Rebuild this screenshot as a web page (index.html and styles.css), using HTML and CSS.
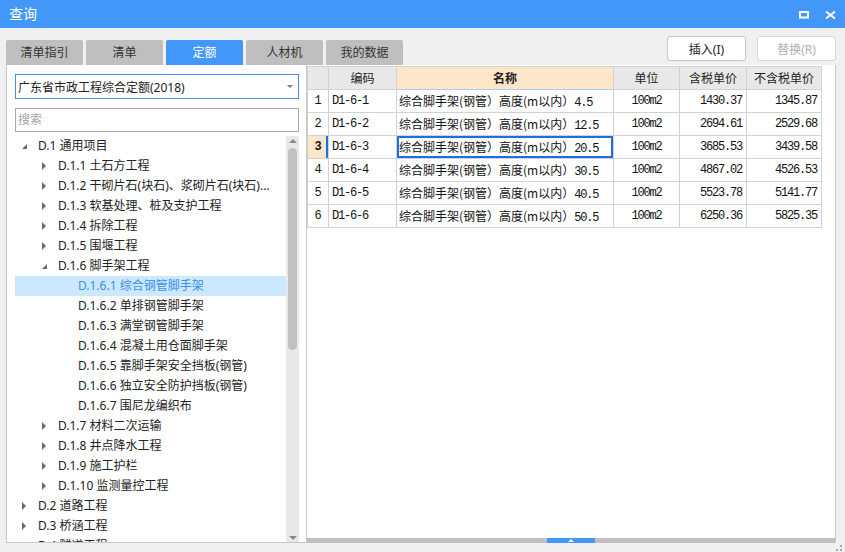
FILE: index.html
```html
<!DOCTYPE html>
<html lang="zh-CN">
<head>
<meta charset="utf-8">
<title>查询</title>
<link rel="stylesheet" href="styles.css">
</head>
<body>
<div class="window">
  <div class="titlebar">
    <span class="title">查询</span>
    <div class="win-btns">
      <svg class="win-icon" width="10" height="8" viewBox="0 0 10 8"><rect x="1" y="1" width="8" height="5.5" fill="none" stroke="#fff" stroke-width="2"/></svg>
      <svg class="win-icon" width="11" height="8" viewBox="0 0 11 8"><path d="M1 0.5 L10 7.5 M10 0.5 L1 7.5" stroke="#fff" stroke-width="2" fill="none"/></svg>
    </div>
  </div>

  <div class="toolbar">
    <div class="tabs">
      <div class="tab">清单指引</div>
      <div class="tab">清单</div>
      <div class="tab active">定额</div>
      <div class="tab">人材机</div>
      <div class="tab">我的数据</div>
    </div>
    <div class="actions">
      <button class="btn">插入(I)</button>
      <button class="btn disabled">替换(R)</button>
    </div>
  </div>

  <div class="content">
    <div class="left-panel">
      <div class="select"><span>广东省市政工程综合定额(2018)</span><span class="select-arrow"></span></div>
      <div class="search">搜索</div>
      <div class="tree-wrap">
        <ul class="tree">
          <li class="l0"><span class="caret open"></span><span>D.1 通用项目</span></li>
          <li class="l1"><span class="caret closed"></span><span>D.1.1 土石方工程</span></li>
          <li class="l1"><span class="caret closed"></span><span>D.1.2 干砌片石(块石)、浆砌片石(块石)...</span></li>
          <li class="l1"><span class="caret closed"></span><span>D.1.3 软基处理、桩及支护工程</span></li>
          <li class="l1"><span class="caret closed"></span><span>D.1.4 拆除工程</span></li>
          <li class="l1"><span class="caret closed"></span><span>D.1.5 围堰工程</span></li>
          <li class="l1"><span class="caret open"></span><span>D.1.6 脚手架工程</span></li>
          <li class="l2 selected"><span class="caret"></span><span>D.1.6.1 综合钢管脚手架</span></li>
          <li class="l2"><span class="caret"></span><span>D.1.6.2 单排钢管脚手架</span></li>
          <li class="l2"><span class="caret"></span><span>D.1.6.3 满堂钢管脚手架</span></li>
          <li class="l2"><span class="caret"></span><span>D.1.6.4 混凝土用仓面脚手架</span></li>
          <li class="l2"><span class="caret"></span><span>D.1.6.5 靠脚手架安全挡板(钢管)</span></li>
          <li class="l2"><span class="caret"></span><span>D.1.6.6 独立安全防护挡板(钢管)</span></li>
          <li class="l2"><span class="caret"></span><span>D.1.6.7 围尼龙编织布</span></li>
          <li class="l1"><span class="caret closed"></span><span>D.1.7 材料二次运输</span></li>
          <li class="l1"><span class="caret closed"></span><span>D.1.8 井点降水工程</span></li>
          <li class="l1"><span class="caret closed"></span><span>D.1.9 施工护栏</span></li>
          <li class="l1"><span class="caret closed"></span><span>D.1.10 监测量控工程</span></li>
          <li class="l0"><span class="caret closed"></span><span>D.2 道路工程</span></li>
          <li class="l0"><span class="caret closed"></span><span>D.3 桥涵工程</span></li>
          <li class="l0"><span class="caret closed"></span><span>D.4 隧道工程</span></li>
        </ul>
        <div class="vscroll">
          <span class="arrow-up"></span>
          <div class="vthumb"></div>
          <div class="spacer"></div>
          <span class="arrow-down"></span>
        </div>
      </div>
    </div>

    <div class="right-panel">
      <div class="table-area">
        <table class="grid">
          <colgroup>
            <col class="c-rn"><col class="c-code"><col class="c-name"><col class="c-unit"><col class="c-tax"><col class="c-notax">
          </colgroup>
          <thead>
            <tr><th></th><th>编码</th><th class="name-h">名称</th><th>单位</th><th>含税单价</th><th>不含税单价</th></tr>
          </thead>
          <tbody>
            <tr><td class="rn">1</td><td class="code">D1-6-1</td><td class="name">综合脚手架(钢管）高度(m以内）<span class="num">4.5</span></td><td class="unit">100m2</td><td class="price">1430.37</td><td class="price">1345.87</td></tr>
            <tr><td class="rn">2</td><td class="code">D1-6-2</td><td class="name">综合脚手架(钢管）高度(m以内）<span class="num">12.5</span></td><td class="unit">100m2</td><td class="price">2694.61</td><td class="price">2529.68</td></tr>
            <tr class="current"><td class="rn">3</td><td class="code">D1-6-3</td><td class="name focus">综合脚手架(钢管）高度(m以内）<span class="num">20.5</span></td><td class="unit">100m2</td><td class="price">3685.53</td><td class="price">3439.58</td></tr>
            <tr><td class="rn">4</td><td class="code">D1-6-4</td><td class="name">综合脚手架(钢管）高度(m以内）<span class="num">30.5</span></td><td class="unit">100m2</td><td class="price">4867.02</td><td class="price">4526.53</td></tr>
            <tr><td class="rn">5</td><td class="code">D1-6-5</td><td class="name">综合脚手架(钢管）高度(m以内）<span class="num">40.5</span></td><td class="unit">100m2</td><td class="price">5523.78</td><td class="price">5141.77</td></tr>
            <tr><td class="rn">6</td><td class="code">D1-6-6</td><td class="name">综合脚手架(钢管）高度(m以内）<span class="num">50.5</span></td><td class="unit">100m2</td><td class="price">6250.36</td><td class="price">5825.35</td></tr>
          </tbody>
        </table>
      </div>
      <div class="hscroll"><div class="hthumb"></div></div>
    </div>
  </div>

  <svg class="grip" width="10" height="8" viewBox="0 0 10 8"><rect x="6" y="1" width="2" height="2" fill="#a8a8a8"/><rect x="6" y="5" width="2" height="2" fill="#a8a8a8"/><rect x="2" y="5" width="2" height="2" fill="#a8a8a8"/></svg>
</div>
</body>
</html>
```

FILE: styles.css
```css
* { box-sizing: border-box; }

body {
  margin: 0;
  background: #f0f0f0;
  font-family: "Noto Sans", "Noto Sans CJK SC", sans-serif;
  font-size: 12px;
  color: #222;
}

.window {
  width: 845px;
  height: 552px;
  position: relative;
  overflow: hidden;
  display: flex;
  flex-direction: column;
  background: #f0f0f0;
}

/* title bar */
.titlebar {
  height: 28px;
  flex: none;
  background: #4297f8;
  color: #fff;
  display: flex;
  align-items: center;
  padding: 0 9px;
  font-size: 14px;
}
.title { line-height: 28px; }
.win-btns {
  margin-left: auto;
  display: flex;
  align-items: center;
  gap: 16px;
  padding-top: 1px;
}
.win-icon { display: block; }

/* toolbar */
.toolbar {
  height: 37px;
  flex: none;
  display: flex;
  padding: 0 9px 0 6px;
}
.tabs {
  display: flex;
  gap: 3px;
  align-self: flex-end;
}
.tab {
  width: 77px;
  height: 25px;
  background: #bfbfbf;
  border-radius: 2px 2px 0 0;
  text-align: center;
  line-height: 25px;
  color: #333;
  font-size: 12px;
}
.tab.active { background: #4297f8; color: #fff; }

.actions {
  margin-left: auto;
  display: flex;
  gap: 11px;
  padding-top: 8px;
}
.btn {
  width: 79px;
  height: 25px;
  background: #fff;
  border: 1px solid #c6c6c6;
  border-radius: 3px;
  font-family: inherit;
  font-size: 12px;
  color: #222;
  padding: 0;
}
.btn.disabled { color: #b0b0b0; border-color: #d6d6d6; }

/* content */
.content {
  flex: 1;
  min-height: 0;
  display: flex;
  padding: 0 9px 9px 6px;
}

.left-panel {
  width: 301px;
  flex: none;
  background: #fff;
  border: 1px solid #c8c8c8;
  border-top: none;
  display: flex;
  flex-direction: column;
  padding: 9px 7px 0 8px;
}
.select {
  height: 25px;
  flex: none;
  border: 1px solid #3d8ff0;
  display: flex;
  align-items: center;
  padding: 0 5px 0 2px;
  color: #222;
}
.select-arrow {
  margin-left: auto;
  width: 0;
  height: 0;
  border-top: 3px solid #7a7a7a;
  border-left: 3px solid transparent;
  border-right: 3px solid transparent;
}
.search {
  margin-top: 9px;
  height: 24px;
  flex: none;
  border: 1px solid #a8a8a8;
  padding-left: 2px;
  line-height: 22px;
  color: #a5a5a5;
}

.tree-wrap {
  margin-top: 4px;
  flex: 1;
  min-height: 0;
  display: flex;
  overflow: hidden;
}
.tree {
  flex: 1;
  list-style: none;
  margin: 0;
  padding: 0;
  overflow: hidden;
}
.tree li {
  height: 20px;
  line-height: 20px;
  display: flex;
  align-items: center;
  white-space: nowrap;
  color: #222;
}
.tree .l0 { padding-left: 0; }
.tree .l1 { padding-left: 20px; }
.tree .l2 { padding-left: 40px; }
.tree li.selected { background: #cce8ff; color: #3b8ef0; }

.caret {
  width: 23px;
  height: 20px;
  flex: none;
  display: flex;
  align-items: center;
  padding-left: 7px;
}
.caret.closed::before {
  content: "";
  width: 0;
  height: 0;
  border-left: 4px solid #6a6a6a;
  border-top: 4px solid transparent;
  border-bottom: 4px solid transparent;
}
.caret.open::before {
  content: "";
  width: 0;
  height: 0;
  margin-top: 1px;
  border-bottom: 5px solid #6a6a6a;
  border-left: 5px solid transparent;
}

.vscroll {
  width: 13px;
  flex: none;
  background: #e8e8e8;
  display: flex;
  flex-direction: column;
  align-items: center;
  padding: 3px 0 2px;
}
.arrow-up {
  width: 0;
  height: 0;
  border-bottom: 4px solid #8a8a8a;
  border-left: 4px solid transparent;
  border-right: 4px solid transparent;
}
.arrow-down {
  width: 0;
  height: 0;
  border-top: 4px solid #8a8a8a;
  border-left: 4px solid transparent;
  border-right: 4px solid transparent;
}
.vthumb {
  width: 9px;
  height: 202px;
  margin-top: 5px;
  border-radius: 5px;
  background: #c1c1c1;
}
.spacer { flex: 1; }

/* right panel */
.right-panel {
  flex: 1;
  min-width: 0;
  background: #fff;
  border-right: 1px solid #c8c8c8;
  display: flex;
  flex-direction: column;
}
.table-area {
  flex: 1;
  min-height: 0;
  padding-top: 1px;
  overflow: hidden;
}
.grid {
  border-collapse: collapse;
  table-layout: fixed;
  width: 514px;
}
.c-rn { width: 21px; }
.c-code { width: 68px; }
.c-name { width: 217px; }
.c-unit { width: 66px; }
.c-tax { width: 67px; }
.c-notax { width: 75px; }

.grid tr { height: 23px; }
.grid th,
.grid td {
  border: 1px solid #d2d2d2;
  padding: 0 3px;
  white-space: nowrap;
  overflow: hidden;
  height: 23px;
}
.grid th {
  background: #e8e8e8;
  font-weight: normal;
  font-size: 12px;
  color: #222;
  text-align: center;
}
.grid th.name-h {
  background: #fde6c8;
  font-weight: bold;
  border-bottom-color: #a9cdf6;
}

.grid td {
  font-family: "Liberation Mono", "Noto Sans CJK SC", monospace;
  font-size: 12px;
  letter-spacing: -1.2px;
  color: #111;
}
.grid td.rn { text-align: center; padding: 0; letter-spacing: 0; }
.grid td.code { text-align: left; }
.grid td.unit { text-align: center; }
.grid td.price { text-align: right; padding-right: 4px; }
.grid td.name {
  font-family: "Noto Sans CJK SC", sans-serif;
  font-size: 12px;
  letter-spacing: 0;
  padding-left: 2px;
}
.grid td.name .num {
  font-family: "Liberation Mono", monospace;
  font-size: 12px;
  letter-spacing: -1.2px;
}
.grid tr.current td.rn {
  background: #fde6c8;
  font-weight: bold;
  box-shadow: inset -2px 0 0 #1a6fe8;
}
.grid td.focus { box-shadow: inset 0 0 0 2px #1a6fe8; }

.hscroll {
  height: 5px;
  flex: none;
  background: #c0c0c0;
}
.hthumb {
  width: 48px;
  height: 5px;
  margin-left: 240px;
  background: #4297f8;
  display: flex;
  justify-content: center;
  align-items: flex-end;
}
.hthumb::after {
  content: "";
  width: 0;
  height: 0;
  margin-bottom: 1px;
  border-bottom: 3px solid #fff;
  border-left: 3px solid transparent;
  border-right: 3px solid transparent;
}

.grip {
  position: absolute;
  right: 1px;
  bottom: 0;
}
```
